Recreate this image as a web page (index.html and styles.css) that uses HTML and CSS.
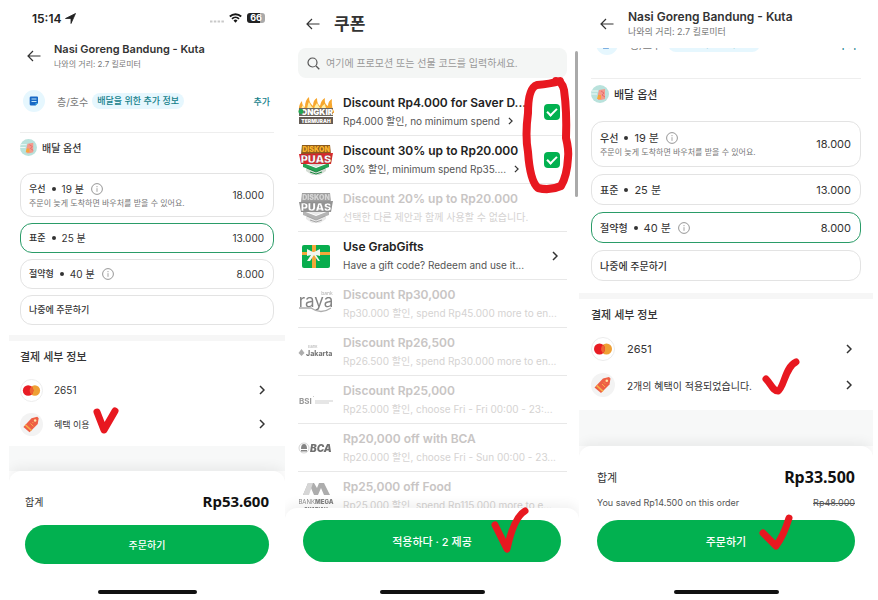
FILE: index.html
```html
<!DOCTYPE html>
<html lang="ko">
<head>
<meta charset="utf-8">
<meta name="viewport" content="width=device-width, initial-scale=1">
<title>Nasi Goreng Bandung - Kuta</title>
<link rel="stylesheet" href="styles.css">
</head>
<body>
<svg class="defs" aria-hidden="true">
  <symbol id="back" viewBox="0 0 14 12"><path d="M13.5 6H1M6 1 1 6l5 5" fill="none" stroke="#333" stroke-width="1.2"/></symbol>
  <symbol id="chevron" viewBox="0 0 6 10"><path d="M1 1l4 4-4 4" fill="none" stroke="#333" stroke-width="1.5"/></symbol>
  <symbol id="info" viewBox="0 0 12 12"><circle cx="6" cy="6" r="5.4" fill="none" stroke="#8b8b8b" stroke-width=".9"/><path d="M6 5.2v3.6M6 3v1.2" stroke="#999" stroke-width=".9"/></symbol>
  <symbol id="note" viewBox="0 0 22 22"><circle cx="11" cy="11" r="11" fill="#e6f7fe"/><path d="M8 6.500h6a1 1 0 0 1 1 1V13l-2.500 2.500H8a1.300 1.300 0 0 1-1.300-1.300V7.800A1.300 1.300 0 0 1 8 6.500z" fill="#1768c5"/><path d="M8.500 9h5M8.500 11.500h5" stroke="#bfe6fa"/><path d="M12.500 15.500V13H15z" fill="#35a7e0"/></symbol>
  <symbol id="rider" viewBox="0 0 18 18"><circle cx="9" cy="9" r="9" fill="#b9e2dc"/><path d="M1 6h6M0 9h6" stroke="#eefaf8"/><path d="M8 5l6-1v10l-4 1H7V9z" fill="#f49a8c"/><path d="M7 10h3v4H6z" fill="#f8a63b"/><path d="M10 6l3 2-2 2 3 2" fill="none" stroke="#e56d6d"/></symbol>
  <symbol id="card" viewBox="0 0 24 24"><circle cx="12" cy="12" r="11.500" fill="#fff" stroke="#ececec"/><circle cx="15.500" cy="12" r="5.500" fill="#eea035"/><circle cx="8.500" cy="12" r="5.500" fill="#e81c24"/><path d="M12 7.800a5.500 5.500 0 0 1 0 8.400 5.500 5.500 0 0 1 0-8.400z" fill="#ee6234"/></symbol>
  <symbol id="tag" viewBox="0 0 24 24"><circle cx="12" cy="12" r="12" fill="#f3f3f3"/><path d="M3.500 14.500 12 5.500l6-1.500 1.500 1.500-1 6-8.500 8.500z" fill="#ee5f45"/><path d="M5.500 12.300l6.500 6" stroke="#f8b04a" stroke-width="1.600"/><circle cx="15.800" cy="7.800" r="1.300" fill="#ffe3a4"/><path d="M11 11l3 3M13 9.500l1 1" stroke="#f8b04a"/></symbol>
  <symbol id="puas" viewBox="0 0 36 32">
    <path d="M8 19h20v8l-6 4h-8l-6-4z" fill="#d5ddd5"/><path d="M5 18l13 5 13-5v4l-13 6-13-6z" fill="#fff"/><path d="M5 19l13 5 13-5v4l-13 5-13-5z" fill="#26a354"/><path d="M9 24l9 4 9-4M12 28l6 2 6-2" fill="none" stroke="#1b8742"/>
    <path d="M4 1h28l1 9H3z" fill="#8b5a1d"/><text class="diskon-word" x="18" y="8" text-anchor="middle">DISKON</text>
    <path d="M1 10l34-1-2 11H3z" fill="#d8292c"/><text class="puas-word" x="18" y="18.500" text-anchor="middle">PUAS</text>
  </symbol>
</svg>
<main class="screens">

<section class="screen screen-standard">
  <div class="status">
    <span class="time">15:14 <svg width="11" height="11" viewBox="0 0 11 11"><path d="M.5 5.500 10.500.5 6 10.500V5.500z" fill="#222" stroke="#222" stroke-width=".8"/></svg></span>
    <span class="signals">
      <svg width="14" height="11" viewBox="0 0 14 11"><path d="M0 8.500h14" stroke="#c9c9c9" stroke-width="2" stroke-dasharray="2.500 1.300"/></svg>
      <svg width="13" height="10" viewBox="0 0 13 10"><path d="M.8 3.500a8.300 8.300 0 0 1 11.400 0M3 5.800a5 5 0 0 1 7 0" fill="none" stroke="#171717" stroke-width="1.800"/><path d="M4.500 7.500a3 3 0 0 1 4 0L6.500 9.700z" fill="#171717"/></svg>
      <span class="battery">66</span>
    </span>
  </div>
  <header class="store">
    <button class="icon-button" aria-label="뒤로"><svg width="14" height="12"><use href="#back"/></svg></button>
    <div><h1>Nasi Goreng Bandung - Kuta</h1><p>나와의 거리: 2.7 킬로미터</p></div>
  </header>
  <div class="body">
    <div class="address">
      <svg class="note"><use href="#note"/></svg><span class="unit">층/호수</span><span class="pill">배달을 위한 추가 정보</span><a href="#add">추가</a>
    </div>
    <section class="delivery">
      <h2><svg class="rider"><use href="#rider"/></svg>배달 옵션</h2>
      <div class="options">
        <label class="option tall"><input type="radio" name="delivery-a"><span><span class="line"><b>우선</b><i></i>19 분<svg><use href="#info"/></svg></span><small>주문이 늦게 도착하면 바우처를 받을 수 있어요.</small></span><span class="fee">18.000</span></label>
        <label class="option"><input type="radio" name="delivery-a" checked><span class="line"><b>표준</b><i></i>25 분</span><span class="fee">13.000</span></label>
        <label class="option"><input type="radio" name="delivery-a"><span class="line"><b>절약형</b><i></i>40 분<svg><use href="#info"/></svg></span><span class="fee">8.000</span></label>
        <label class="option"><input type="radio" name="delivery-a"><span class="line"><b>나중에 주문하기</b></span></label>
      </div>
    </section>
    <section class="payment">
      <h2>결제 세부 정보</h2>
      <button class="pay-row"><svg class="badge"><use href="#card"/></svg><span>2651</span><svg class="chev"><use href="#chevron"/></svg></button>
      <button class="pay-row"><svg class="badge"><use href="#tag"/></svg><span class="marked perk">혜택 이용<svg class="mark mark-perk" viewBox="0 0 26 26"><path d="M4 5l7 18L22 4" /></svg></span><svg class="chev"><use href="#chevron"/></svg></button>
    </section>
  </div>
  <footer class="sheet">
    <div class="total"><span>합계</span><strong>Rp53.600</strong></div>
    <button class="primary">주문하기</button>
    <div class="home"></div>
  </footer>
</section>

<section class="screen screen-coupons">
  <header class="coupon-head">
    <button class="icon-button" aria-label="뒤로"><svg width="14" height="12"><use href="#back"/></svg></button>
    <h1>쿠폰</h1>
  </header>
  <label class="search">
    <svg width="13" height="13" viewBox="0 0 13 13"><circle cx="5.500" cy="5.500" r="4.500" fill="none" stroke="#555" stroke-width="1.200"/><path d="M9 9l3.300 3.300" stroke="#555" stroke-width="1.300"/></svg>
    <input type="text" aria-label="프로모션 코드" placeholder="여기에 프로모션 또는 선물 코드를 입력하세요.">
  </label>
  <div class="scrollbar"></div>
  <div class="coupons">
    <ul>
      <li>
        <svg class="thumb" viewBox="0 0 36 32"><path d="M1 17Q0 9 4 5q0 5 3 6 0-7 4-10 0 6 4 9 0-6 4-8 0 6 3 8 1-6 5-8-1 6 3 8 0-5 4-7-1 9 3 14z" fill="#f7a72e"/><path d="M3 16q0-5 2-7 1 3 4 4 1-6 2-7 2 5 5 7 1-4 3-6 2 4 4 6 1-4 4-5 0 5 5 8z" fill="#fff0a8"/><path d="M1 12h34v8H1z" fill="#6d655c"/><text class="ongkir-word" x="19" y="19" text-anchor="middle">ONGKIR</text><circle cx="3" cy="15.500" r="2.500" fill="#21a657"/><path d="M1 21h34v7H1z" fill="#655c55"/><text class="tiny-word" x="18" y="26.500" text-anchor="middle">TERMURAH</text></svg>
        <div class="deal"><h3>Discount Rp4.000 for Saver D...</h3><p><span>Rp4.000 할인, no minimum spend</span><svg class="small-chev"><use href="#chevron"/></svg></p></div>
        <input type="checkbox" checked aria-label="Discount Rp4.000">
      </li>
      <li>
        <svg class="thumb"><use href="#puas"/></svg>
        <div class="deal"><h3>Discount 30% up to Rp20.000</h3><p><span>30% 할인, minimum spend Rp35....</span><svg class="small-chev"><use href="#chevron"/></svg></p></div>
        <input type="checkbox" checked aria-label="Discount 30%">
      </li>
      <li class="off"><svg class="thumb"><use href="#puas"/></svg><div class="deal"><h3>Discount 20% up to Rp20.000</h3><p><span>선택한 다른 제안과 함께 사용할 수 없습니다.</span></p></div></li>
      <li class="gift">
        <svg class="thumb" viewBox="0 0 36 32"><rect x="4" y="5" width="28" height="23" rx="2" fill="#08ad4e"/><path d="M4 12h28v3H4zM14 5h4v23h-4z" fill="#f2a83a"/><path d="M15 12l-6-3v7l4-1-4 6h3l4-6 4 6h2l-4-6 4 1V9l-6 3z" fill="#f2f6ee"/></svg>
        <div class="deal"><h3>Use GrabGifts</h3><p><span>Have a gift code? Redeem and use it...</span></p></div>
        <svg class="chev"><use href="#chevron"/></svg>
      </li>
      <li class="off"><svg class="thumb" viewBox="0 0 36 32"><text class="raya" x="18" y="19" text-anchor="middle">raya</text><text x="29" y="7" font-size="5" text-anchor="middle" fill="#777">bank</text><path d="M1 20h12q10 7 20 0" fill="none" stroke="#777" stroke-width="1.300"/></svg><div class="deal"><h3>Discount Rp30,000</h3><p><span>Rp30.000 할인, spend Rp45.000 more to en...</span></p></div></li>
      <li class="off"><svg class="thumb" viewBox="0 0 36 32"><path d="M3.500 13l3 4-3 3-3-3z" fill="#777"/><text x="10" y="12" font-size="4" fill="#777">Bank</text><text x="8" y="20" font-size="7" font-weight="800" fill="#222">Jakarta</text></svg><div class="deal"><h3>Discount Rp26,500</h3><p><span>Rp26.500 할인, spend Rp30.000 more to en...</span></p></div></li>
      <li class="off"><svg class="thumb" viewBox="0 0 36 32"><text x="1" y="20" font-size="8" font-weight="700" fill="#555">BSI</text><path d="M15 12l1 1M17 17h18M17 19h14" stroke="#888" stroke-width=".7"/></svg><div class="deal"><h3>Discount Rp25,000</h3><p><span>Rp25.000 할인, choose Fri - Fri 00:00 - 23:...</span></p></div></li>
      <li class="off"><svg class="thumb" viewBox="0 0 36 32"><circle cx="6" cy="16" r="5" fill="none" stroke="#999" stroke-width=".7"/><path d="M3 17q0-5 3-5t3 5zM3 18h6v1.500H3z" fill="#333"/><text x="12" y="20" font-size="10" font-weight="900" font-style="italic" fill="#111">BCA</text></svg><div class="deal"><h3>Rp20,000 off with BCA</h3><p><span>Rp20.000 할인, choose Fri - Sun 00:00 - 23...</span></p></div></li>
      <li class="off"><svg class="thumb" viewBox="0 0 36 32"><path d="M5 15L10 3h6l3 5 2-5h5l6 12h-6l-3-7-3 7h-4l-3-7-3 7z" fill="#777"/><path d="M5 15L10 3h5l-4 12z" fill="#bbb"/><text x="18" y="24" font-size="6" text-anchor="middle" fill="#333">BANK<tspan font-weight="900">MEGA</tspan></text><text x="18" y="31" font-size="5" font-weight="900" text-anchor="middle" fill="#222">SYARIAH</text></svg><div class="deal"><h3>Rp25,000 off Food</h3><p><span>Rp25.000 할인, spend Rp115.000 more to e...</span></p></div></li>
    </ul>
    <svg class="mark mark-loop" viewBox="0 0 54 120"><path d="M40 5Q30 8 17 9Q8 12 8 37Q5 60 8 76Q10 105 18 112Q30 115 41 110Q47 100 48 82Q49 74 46 62Q47 35 44 14Q42 5 36 5" /></svg>
  </div>
  <footer class="sheet">
    <button class="primary"><span class="marked">적용하다 · 2 제공<svg class="mark mark-apply" viewBox="0 0 40 46"><path d="M5 18l12 24Q24 10 35 4" /></svg></span></button>
    <div class="home"></div>
  </footer>
</section>

<section class="screen screen-saver">
  <header class="store">
    <button class="icon-button" aria-label="뒤로"><svg width="14" height="12"><use href="#back"/></svg></button>
    <div><h1>Nasi Goreng Bandung - Kuta</h1><p>나와의 거리: 2.7 킬로미터</p></div>
  </header>
  <div class="body">
    <div class="address">
      <svg class="note"><use href="#note"/></svg><span class="unit">층/호수</span><span class="pill">배달을 위한 추가 정보</span><a href="#add">추가</a>
    </div>
    <section class="delivery">
      <h2><svg class="rider"><use href="#rider"/></svg>배달 옵션</h2>
      <div class="options">
        <label class="option tall"><input type="radio" name="delivery-b"><span><span class="line"><b>우선</b><i></i>19 분<svg><use href="#info"/></svg></span><small>주문이 늦게 도착하면 바우처를 받을 수 있어요.</small></span><span class="fee">18.000</span></label>
        <label class="option"><input type="radio" name="delivery-b"><span class="line"><b>표준</b><i></i>25 분</span><span class="fee">13.000</span></label>
        <label class="option"><input type="radio" name="delivery-b" checked><span class="line"><b>절약형</b><i></i>40 분<svg><use href="#info"/></svg></span><span class="fee">8.000</span></label>
        <label class="option"><input type="radio" name="delivery-b"><span class="line"><b>나중에 주문하기</b></span></label>
      </div>
    </section>
    <section class="payment">
      <h2>결제 세부 정보</h2>
      <button class="pay-row"><svg class="badge"><use href="#card"/></svg><span>2651</span><svg class="chev"><use href="#chevron"/></svg></button>
      <button class="pay-row"><svg class="badge"><use href="#tag"/></svg><span class="marked perk">2개의 혜택이 적용되었습니다.<svg class="mark mark-perks" viewBox="0 0 40 40"><path d="M5 22c5 5 7 12 12 12C23 31 24 10 35 5" /></svg></span><svg class="chev"><use href="#chevron"/></svg></button>
    </section>
  </div>
  <footer class="sheet">
    <div class="total"><span>합계</span><strong>Rp33.500</strong></div>
    <div class="saved"><span>You saved Rp14.500 on this order</span><del>Rp48.000</del></div>
    <button class="primary"><span class="marked">주문하기<svg class="mark mark-order" viewBox="0 0 36 38"><path d="M5 20l13 13Q26 22 31 5" /></svg></span></button>
    <div class="home"></div>
  </footer>
</section>

</main>
</body>
</html>
```
FILE: styles.css
```css
* { box-sizing: border-box; }
body, h1, h2, h3, p, ul { margin: 0; padding: 0; }
body {
  background: #fff;
  color: #333;
  font-family: Inter, "Noto Sans CJK KR", sans-serif;
  font-size: 10px;
}
button, input { font: inherit; color: inherit; }
button { border: 0; background: none; padding: 0; cursor: pointer; }
svg { display: block; flex: none; }
.defs { position: absolute; width: 0; height: 0; }

.screens {
  display: grid;
  grid-template-columns: 276fr 294fr 294fr;
  height: 100vh;
  min-height: 600px;
  padding: 0 5px 0 9px;
}
.screen {
  --inset: 11px;
  --sheet-inset: 18px;
  --gap: 7px;
  display: flex;
  flex-direction: column;
  min-width: 0;
  min-height: 0;
  font-size: 11px;
}
.screen-standard { --inset: 11px; --sheet-inset: 16px; --gap: 6px; font-size: 10px; }
.screen-saver { --inset: 12px; }

/* Status bar */
.status {
  display: flex;
  justify-content: space-between;
  align-items: center;
  height: 36px;
  padding: 0 20px 0 23px;
}
.time { display: flex; align-items: center; gap: 3px; font-size: 12px; font-weight: 600; color: #222; }
.signals { display: flex; align-items: center; gap: 5px; }
.battery {
  width: 18px;
  border-radius: 3px;
  background: linear-gradient(90deg, #222 70%, #aaa 70%);
  color: #fff;
  font-size: 9px;
  font-weight: 700;
  line-height: 10px;
  text-align: center;
}

/* Store header */
.store { display: flex; align-items: center; flex: none; height: 40px; padding-left: 18px; gap: 13px; }
.store h1 { font-size: 11px; line-height: 16px; font-weight: 600; white-space: nowrap; }
.store p { font-size: 8px; line-height: 14px; color: #777; }
.screen-saver .store { height: 48px; padding-left: 21px; gap: 14px; }
.screen-saver .store h1 { font-size: 12px; }
.screen-saver .store p { font-size: 9px; }

.body { display: flex; flex-direction: column; flex: 1; min-height: 0; overflow: hidden; background: #f7f8f8; }

/* Address line */
.address { display: flex; align-items: center; flex: none; height: 56px; padding: 0 15px 6px 14px; background: #fff; }
.note { width: 22px; height: 22px; }
.unit { margin: 0 4px 0 12px; color: #777; }
.pill { padding: 0 5px; border-radius: 8px; background: #e6f7fe; color: #14808a; font-size: 9px; line-height: 16px; font-weight: 500; }
.address a { margin-left: auto; color: #14808a; text-decoration: none; font-weight: 500; font-size: 9px; }
.screen-saver .address { height: 59px; margin-top: -29px; padding: 0 16px 9px 17px; }
.screen-saver .unit { font-size: 10px; margin-right: 7px; }
.screen-saver .address a { font-size: 10px; }

/* Delivery options */
.delivery { flex: none; padding: 0 var(--inset) 10px; background: #fff; }
.delivery h2 {
  display: flex;
  align-items: center;
  gap: 5px;
  height: 29px;
  margin-bottom: 12px;
  border-top: 1px solid #eee;
  font-size: 10px;
  font-weight: 500;
}
.rider { width: 17px; height: 17px; }
.options { display: flex; flex-direction: column; gap: var(--gap); }
.option {
  display: flex;
  align-items: center;
  justify-content: space-between;
  height: 30px;
  padding: 0 9px 0 8px;
  border: 1px solid #e3e3e3;
  border-radius: 12px;
  line-height: 16px;
}
.option.tall { height: 44px; }
.option:has(:checked) { border-color: #2a9c68; }
.option input { position: absolute; opacity: 0; width: 0; height: 0; margin: 0; }
.line { display: flex; align-items: center; }
.line b { font-size: 9px; font-weight: 500; }
.line i { width: 4px; height: 4px; margin: 0 6px; border-radius: 50%; background: #333; }
.line svg { width: 12px; height: 12px; margin-left: 7px; }
.option small { display: block; font-size: 8px; line-height: 13px; color: #777; }
.screen-saver .delivery { padding-bottom: 12px; }
.screen-saver .delivery h2 { height: 30px; margin-bottom: 13px; font-size: 11px; }
.screen-saver .rider { width: 18px; height: 18px; }
.screen-saver .option { height: 31px; }
.screen-saver .option.tall { height: 46px; }
.screen-saver .line b { font-size: 10px; }

/* Payment */
.payment { flex: none; padding: 0 var(--inset) 5px; border-top: 6px solid #f6f6f6; background: #fff; }
.payment h2 { font-size: 11px; line-height: 32px; font-weight: 500; }
.pay-row { display: flex; align-items: center; width: 100%; height: 34px; text-align: left; }
.perk { font-size: 9px; }
.badge { width: 23px; height: 23px; margin-right: 11px; }
.chev { width: 6px; height: 10px; margin: 0 9px 0 auto; }
.screen-saver .payment { padding-bottom: 7px; }
.screen-saver .pay-row { height: 36px; }
.screen-saver .perk { font-size: 10px; }
.screen-saver .badge { width: 24px; height: 24px; margin-right: 12px; }

/* Bottom sheet */
.sheet {
  position: relative;
  flex: none;
  padding: 12px var(--sheet-inset) 6px;
  border-radius: 12px 12px 0 0;
  background: #fff;
  box-shadow: 0 -4px 12px rgba(0, 0, 0, .06);
  clip-path: inset(-20px 0 0 0);
}
.total { display: flex; align-items: center; justify-content: space-between; height: 38px; }
.total strong { font: 700 15px "Noto Sans", sans-serif; color: #111; }
.saved { display: flex; justify-content: space-between; margin-bottom: 10px; font-size: 9px; line-height: 14px; color: #555; }
.primary { display: block; width: 100%; height: 42px; border-radius: 21px; background: #02b150; color: #fff; font-weight: 500; }
.home { width: 105px; height: 4px; margin: 28px auto 0; border-radius: 2px; background: #111; }
.screen-standard .total { height: 36px; margin-bottom: 6px; }
.screen-standard .primary { height: 39px; }
.screen-standard .home { width: 99px; margin-top: 26px; }
.screen-saver .total strong { font-size: 16px; }

/* Coupons */
.screen-coupons { position: relative; }
.coupon-head { display: flex; align-items: center; flex: none; gap: 14px; height: 48px; padding-left: 21px; }
.coupon-head h1 { font-size: 17px; line-height: 24px; font-weight: 700; }
.search { display: flex; align-items: center; flex: none; gap: 6px; height: 30px; margin: 0 12px 10px 13px; padding: 0 9px; border-radius: 8px; background: #f4f6f5; }
.search input { flex: 1; min-width: 0; border: 0; background: none; padding: 0; outline: 0; font-size: 10px; }
.search input::placeholder { color: #999; }
.scrollbar { position: absolute; top: 51px; right: 1px; width: 3px; height: 146px; border-radius: 2px; background: #aaa; }
.coupons { position: relative; flex: 1; min-height: 0; }
.coupons ul { height: 100%; margin: 0 12px 0 13px; overflow: hidden; list-style: none; }
.coupons li { display: flex; align-items: center; height: 48px; border-bottom: 1px solid #e8e8e8; }
.thumb { width: 36px; height: 32px; margin-right: 9px; font-family: Inter, sans-serif; }
.deal { flex: 1; min-width: 0; }
.deal h3 { font-size: 12px; line-height: 19px; font-weight: 600; color: #222; }
.deal p { display: flex; align-items: center; gap: 8px; font-size: 10px; line-height: 19px; color: #555; }
.deal h3, .deal p span { white-space: nowrap; }
.small-chev { width: 5px; height: 8px; }
.coupons input { appearance: none; flex: none; width: 16px; height: 16px; margin: 0 7px 0 12px; border-radius: 4px; background: #02b150; display: grid; place-items: center; }
.coupons input:checked::after { content: ""; width: 8px; height: 4px; border: solid #fff; border-width: 0 0 2px 2px; transform: translateY(-1px) rotate(-45deg); }
.off .thumb { filter: grayscale(1); opacity: .6; }
.off h3 { color: #c8c5c4; }
.off p { color: #d5d3d2; }
.diskon-word { font-size: 7px; font-weight: 900; fill: #f9b42c; }
.puas-word { font-size: 11px; font-weight: 900; fill: #fff; stroke: #712; stroke-width: .3px; }
.ongkir-word { font-size: 8px; font-weight: 900; fill: #fff; }
.tiny-word { font-size: 5px; font-weight: 900; fill: #fff; }
.raya { font-size: 17px; fill: #333; }

/* Red pen marks drawn over the screens */
.marked { position: relative; }
.mark { position: absolute; z-index: 2; pointer-events: none; overflow: visible; }
.mark path { fill: none; stroke: #e81820; stroke-width: 7px; stroke-linecap: round; stroke-linejoin: round; }
.mark-perk { left: 100%; top: -11px; width: 26px; height: 26px; margin-left: 3px; }
.mark-loop { right: 5px; top: -12px; width: 54px; height: 120px; }
.mark-loop path { stroke-width: 8px; }
.mark-apply { left: 100%; top: -28px; width: 40px; height: 46px; margin-left: 18px; }
.mark-perks { left: 100%; top: -21px; width: 40px; height: 40px; margin-left: 9px; }
.mark-order { left: 100%; top: -22px; width: 36px; height: 38px; margin-left: 12px; }
```
